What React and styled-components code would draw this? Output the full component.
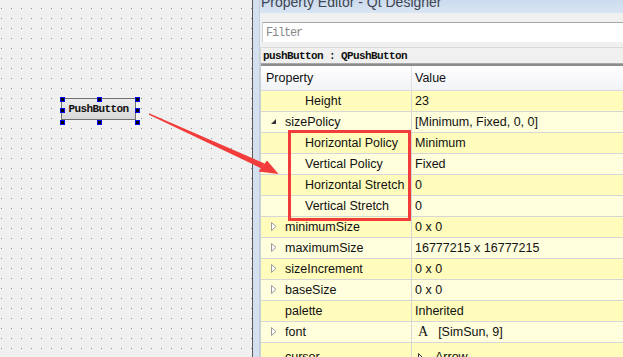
import React from 'react';
import styled, { createGlobalStyle } from 'styled-components';

const GlobalStyle = createGlobalStyle`
  html, body {
    margin: 0;
    padding: 0;
    background: #f0f0f0;
    overflow: hidden;
  }
`;

const Screen = styled.div`
  position: relative;
  width: 623px;
  height: 357px;
  display: flex;
  overflow: hidden;
  font-family: "Liberation Sans", Arial, sans-serif;
`;

const Canvas = styled.div`
  position: relative;
  width: 252px;
  flex: none;
  background-color: #f0f0f0;
  background-image: linear-gradient(to bottom, transparent 1px, #f0f0f0 1px),
    linear-gradient(to right, #8e8e8e 1px, #f0f0f0 1px);
  background-size: 10px 10px;
  background-position: 1px 8px;
`;

const Divider = styled.div`
  width: 1px;
  flex: none;
  background: #5a5a5a;
`;

const FrameStrip = styled.div`
  width: 6px;
  flex: none;
  background: #d5e0ee;
  border-right: 1px solid #c3cedb;
`;

const Panel = styled.div`
  flex: 1;
  min-width: 0;
  display: flex;
  flex-direction: column;
  background: #f0f0f0;
  & > * {
    flex-shrink: 0;
  }
`;

const TitleBar = styled.div`
  height: 13px;
  overflow: hidden;
  background: linear-gradient(to bottom, #cbdbed, #d9e5f2);
  padding-left: 1px;
`;

const TitleText = styled.div`
  margin-top: -6px;
  font-size: 14px;
  line-height: 17px;
  color: #3e4450;
  white-space: nowrap;
`;

const FilterBand = styled.div`
  padding: 9px 0 5px 2px;
`;

const FilterBox = styled.div`
  height: 19px;
  background: #fff;
  border-top: 1px solid #a5a5a5;
  border-left: 1px solid #d0d0d0;
  display: flex;
  align-items: center;
  padding-left: 3px;
  font-family: "Liberation Mono", monospace;
  font-size: 12px;
  letter-spacing: -1.2px;
  color: #8a8a8a;
`;

const ObjectLabel = styled.div`
  height: 15px;
  border-top: 1px solid #dadada;
  border-left: 1px solid #dadada;
  display: flex;
  align-items: center;
  padding-left: 2px;
  font-family: "Liberation Mono", monospace;
  font-size: 11px;
  letter-spacing: -0.6px;
  font-weight: bold;
  color: #111;
`;

const Table = styled.div`
  flex: 1 1 auto !important;
  min-height: 0;
  overflow: hidden;
  border-top: 1px solid #a8a8a8;
  border-left: 1px solid #c8cfd8;
  display: flex;
  flex-direction: column;
  & > * {
    flex-shrink: 0;
  }
`;

const TopEdge = styled.div`
  height: 2px;
  background: #8c8c8c;
`;

const HeaderRow = styled.div`
  height: 24px;
  display: grid;
  grid-template-columns: 150px 1fr;
  background: linear-gradient(to bottom, #ffffff, #f1f3f6);
  border-bottom: 1px solid #d8dade;
  font-size: 12.5px;
  color: #111;
`;

const HeaderCell = styled.div`
  display: flex;
  align-items: center;
  padding-left: 5px;
  & + & {
    border-left: 1px solid #dfe2e6;
    padding-left: 3px;
  }
`;

const Row = styled.div`
  height: 20px;
  display: grid;
  grid-template-columns: 150px 1fr;
  background: ${p => (p.$dark ? '#fffcbc' : '#fffedd')};
  border-bottom: 1px solid #d6d6d6;
  font-size: 12.5px;
  color: #111;
  white-space: nowrap;
`;

const NameCell = styled.div`
  display: flex;
  align-items: center;
  padding-left: ${p => (p.$indent ? 44 : 24)}px;
  position: relative;
`;

const ValueCell = styled.div`
  display: flex;
  align-items: center;
  gap: 6px;
  padding-left: 3px;
  border-left: 1px solid #d6d6d6;
`;

const Toggle = styled.svg`
  position: absolute;
  left: 10px;
  top: ${p => p.$top}px;
`;

const FontGlyph = styled.span`
  font-family: "Liberation Serif", serif;
  font-size: 14px;
  margin-left: 3px;
  margin-right: 4px;
`;

const DesignButton = styled.div`
  position: absolute;
  left: 61px;
  top: 98px;
  width: 73px;
  height: 20px;
  border: 1px solid #707070;
  background: linear-gradient(to bottom, #ececec, #d8d8d8);
  display: flex;
  align-items: center;
  justify-content: center;
  font-family: "Liberation Mono", monospace;
  font-size: 11px;
  letter-spacing: -0.6px;
  font-weight: bold;
  color: #111;
`;

const Handle = styled.span`
  position: absolute;
  width: 3px;
  height: 3px;
  background: #000;
  border: 1px solid #0000ff;
  left: ${p => p.$x}px;
  top: ${p => p.$y}px;
`;

const Highlight = styled.div`
  position: absolute;
  left: 288px;
  top: 130px;
  width: 117px;
  height: 85px;
  border: 3px solid #f23b3b;
  pointer-events: none;
`;

const Overlay = styled.svg`
  position: absolute;
  left: 0;
  top: 0;
  pointer-events: none;
`;

const rows = [
  { name: 'Height', value: '23', indent: true },
  { name: 'sizePolicy', value: '[Minimum, Fixed, 0, 0]', toggle: 'open' },
  { name: 'Horizontal Policy', value: 'Minimum', indent: true },
  { name: 'Vertical Policy', value: 'Fixed', indent: true },
  { name: 'Horizontal Stretch', value: '0', indent: true },
  { name: 'Vertical Stretch', value: '0', indent: true },
  { name: 'minimumSize', value: '0 x 0', toggle: 'closed' },
  { name: 'maximumSize', value: '16777215 x 16777215', toggle: 'closed' },
  { name: 'sizeIncrement', value: '0 x 0', toggle: 'closed' },
  { name: 'baseSize', value: '0 x 0', toggle: 'closed' },
  { name: 'palette', value: 'Inherited' },
  { name: 'font', value: '[SimSun, 9]', toggle: 'closed', icon: 'font' },
  { name: 'cursor', value: 'Arrow', icon: 'cursor' },
];

const handles = [
  [-2, -2], [35, -2], [73, -2],
  [-2, 9], [73, 9],
  [-2, 21], [35, 21], [73, 21],
];

const ToggleIcon = ({ kind }) =>
  kind === 'open' ? (
    <Toggle width="6" height="6" viewBox="0 0 6 6" $top={7}>
      <polygon points="5,0 5,5 0,5" fill="#333" />
    </Toggle>
  ) : (
    <Toggle width="6" height="9" viewBox="0 0 6 9" $top={5}>
      <polygon points="0.5,0.5 5,4.5 0.5,8.5" fill="#fff" stroke="#9a9a9a" />
    </Toggle>
  );

const CursorIcon = () => (
  <svg width="11" height="17" viewBox="0 0 11 17" style={{ marginLeft: 3, marginTop: 10 }}>
    <polygon points="0.5,0.5 0.5,13 3.5,10 6,15.5 8,14.5 5.5,9.5 9.5,9.5" fill="#fff" stroke="#333" />
  </svg>
);

const App = () => (
  <>
    <GlobalStyle />
    <Screen>
      <Canvas>
        <DesignButton>
          PushButton
          {handles.map(([x, y]) => (
            <Handle key={`${x}-${y}`} $x={x} $y={y} />
          ))}
        </DesignButton>
      </Canvas>
      <Divider />
      <FrameStrip />
      <Panel>
        <TitleBar>
          <TitleText>Property Editor - Qt Designer</TitleText>
        </TitleBar>
        <FilterBand>
          <FilterBox>Filter</FilterBox>
        </FilterBand>
        <ObjectLabel>pushButton : QPushButton</ObjectLabel>
        <Table>
          <TopEdge />
          <HeaderRow>
            <HeaderCell>Property</HeaderCell>
            <HeaderCell>Value</HeaderCell>
          </HeaderRow>
          {rows.map((r, i) => (
            <Row key={r.name} $dark={i % 2 === 0}>
              <NameCell $indent={r.indent}>
                {r.toggle && <ToggleIcon kind={r.toggle} />}
                {r.name}
              </NameCell>
              <ValueCell>
                {r.icon === 'font' && <FontGlyph>A</FontGlyph>}
                {r.icon === 'cursor' && <CursorIcon />}
                {r.value}
              </ValueCell>
            </Row>
          ))}
        </Table>
      </Panel>
      <Highlight />
      <Overlay width="623" height="357" viewBox="0 0 623 357">
        <polygon points="149,113.3 264.5,163.5 261.5,168.5 149,114.7" fill="#f23b3b" />
        <polygon points="267,160.5 278.5,174 258.5,171.5" fill="#f23b3b" />
      </Overlay>
    </Screen>
  </>
);

export default App;
